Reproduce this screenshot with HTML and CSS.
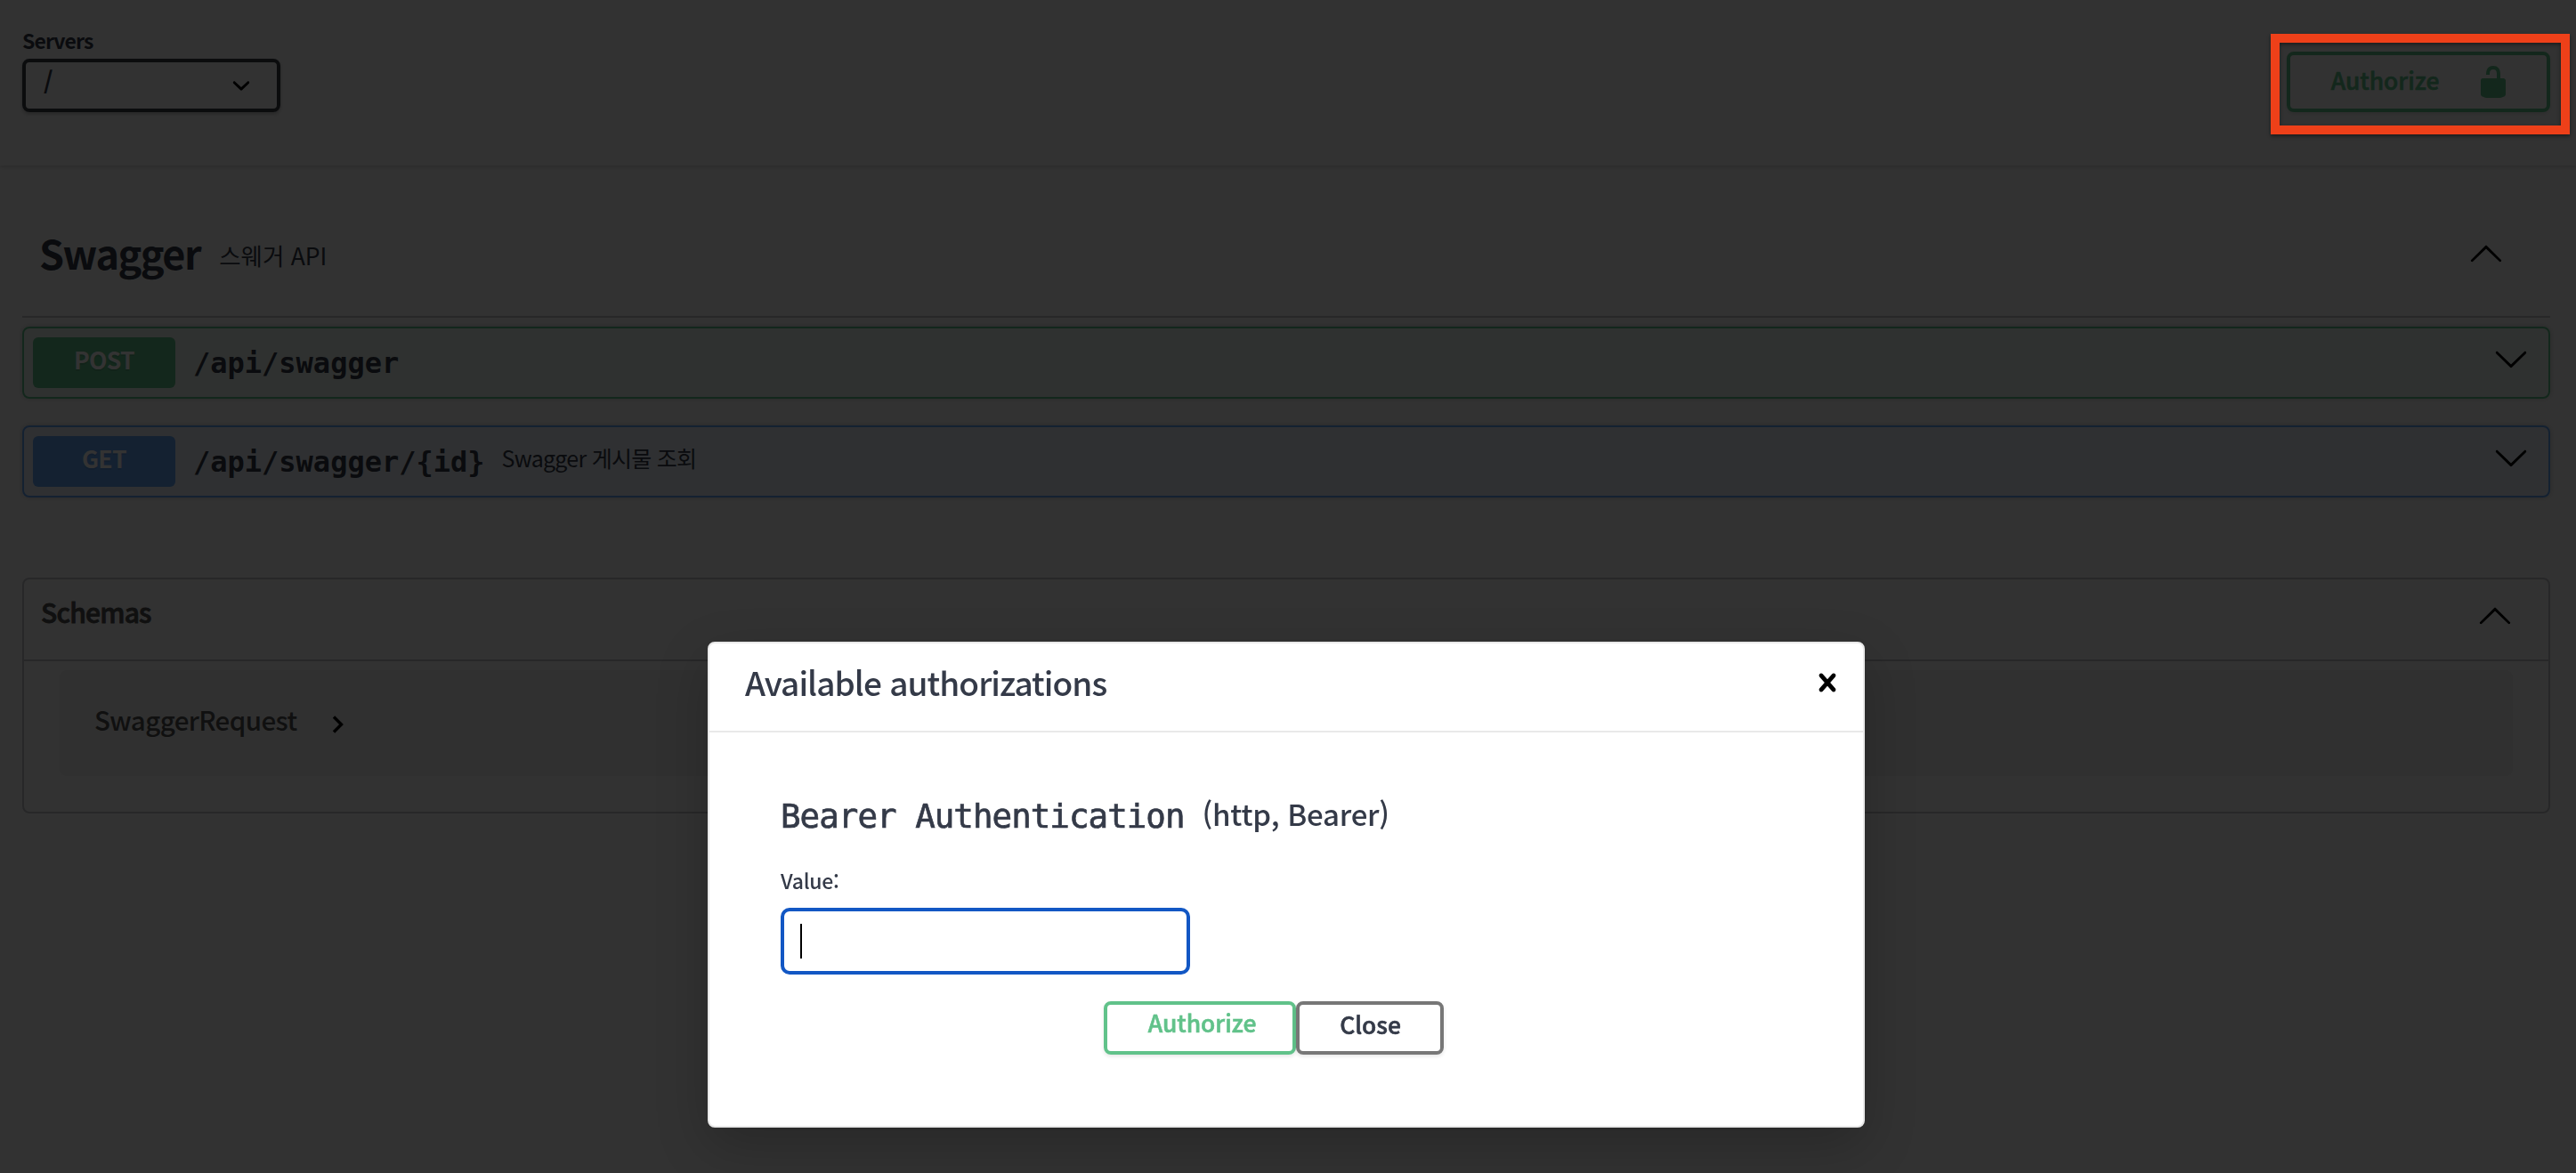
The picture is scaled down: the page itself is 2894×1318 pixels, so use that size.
FILE: index.html
```
<!DOCTYPE html>
<html lang="ko">
<head>
<meta charset="utf-8">
<title>Swagger UI</title>
<link rel="stylesheet" href="styles.css">
</head>
<body>
<svg class="sprite" aria-hidden="true">
  <symbol id="down" viewBox="0 0 20 20"><path d="M17.418 6.109c.272-.268.709-.268.979 0s.271.701 0 .969l-7.908 7.83c-.27.268-.707.268-.979 0l-7.908-7.83c-.27-.268-.27-.701 0-.969.271-.268.709-.268.979 0L10 13.25z"/></symbol>
  <symbol id="up" viewBox="0 0 20 20"><path d="M17.418 14.908c.272.268.709.268.979 0s.271-.701 0-.969L10.489 6.109c-.27-.268-.707-.268-.979 0l-7.908 7.83c-.27.268-.27.701 0 .969.271.268.709.268.979 0L10 7.767z"/></symbol>
  <symbol id="select" viewBox="0 0 20 20"><path d="M13.418 7.859c.271-.268.709-.268.978 0 .27.268.272.701 0 .969l-3.908 3.83c-.27.268-.707.268-.979 0l-3.908-3.83c-.27-.267-.27-.701 0-.969.271-.268.709-.268.978 0L10 11z"/></symbol>
  <symbol id="unlocked" viewBox="0 0 20 20"><path d="M15.8 8H14V5.6C14 2.703 12.665 1 10 1 7.334 1 6 2.703 6 5.6V6h2v-.801C8 3.754 8.797 3 10 3c1.203 0 2 .754 2 2.199V8H4c-.553 0-1 .646-1 1.199V17c0 .549.428 1.139.951 1.307l1.197.387C5.672 18.861 6.55 19 7.1 19h5.8c.549 0 1.428-.139 1.951-.307l1.196-.387c.524-.167.953-.757.953-1.306V9.199C17 8.646 16.352 8 15.8 8z"/></symbol>
  <symbol id="close" viewBox="0 0 20 20"><path d="M14.348 14.849c-.469.469-1.229.469-1.697 0L10 11.819l-2.651 3.029c-.469.469-1.229.469-1.697 0-.469-.469-.469-1.229 0-1.697l2.758-3.15-2.759-3.152c-.469-.469-.469-1.228 0-1.697.469-.469 1.228-.469 1.697 0L10 8.183l2.651-3.031c.469-.469 1.228-.469 1.697 0 .469.469.469 1.229 0 1.697l-2.758 3.152 2.758 3.15c.469.469.469 1.229 0 1.698z"/></symbol>
</svg>

<div class="page">
  <section class="scheme">
    <div class="servers">
      <span class="servers-title">Servers</span>
      <div class="select"><span>/</span><svg class="icon"><use href="#select"/></svg></div>
    </div>
    <div class="btn authorize top-authorize"><span>Authorize</span><svg class="icon"><use href="#unlocked"/></svg></div>
  </section>

  <main class="content">
    <header class="tag">
      <h3 class="tag-name">Swagger</h3>
      <small class="tag-desc">스웨거 API</small>
      <svg class="icon"><use href="#up"/></svg>
    </header>

    <div class="op post">
      <span class="method">POST</span>
      <span class="path">/api/swagger</span>
      <svg class="icon"><use href="#down"/></svg>
    </div>
    <div class="op get">
      <span class="method">GET</span>
      <span class="path">/api/swagger/{id}</span>
      <span class="summary">Swagger 게시물 조회</span>
      <svg class="icon"><use href="#down"/></svg>
    </div>

    <section class="models">
      <h4 class="models-title"><span>Schemas</span><svg class="icon"><use href="#up"/></svg></h4>
      <div class="model">
        <span>SwaggerRequest</span>
        <svg class="toggle" viewBox="0 0 14 20"><path d="M2 1.5 10.500 10 2 18.500"/></svg>
      </div>
    </section>
  </main>
</div>

<div class="backdrop"></div>
<div class="highlight"></div>

<div class="modal" role="dialog">
  <header class="modal-head"><h3>Available authorizations</h3><svg class="icon"><use href="#close"/></svg></header>
  <div class="modal-body">
    <h4 class="scheme-name"><code>Bearer Authentication</code><span>(http, Bearer)</span></h4>
    <label class="value-label">Value:</label>
    <div class="field"><i class="caret"></i></div>
    <div class="actions">
      <div class="btn authorize">Authorize</div>
      <div class="btn close">Close</div>
    </div>
  </div>
</div>
</body>
</html>
```
FILE: styles.css
```
* { box-sizing: border-box; }

body {
  margin: 0;
  height: 1318px;
  overflow: hidden;
  background: #fafafa;
  color: #343a48;
  font-family: "Noto Sans CJK KR", "Noto Sans", sans-serif;
  font-weight: 500;
}

h3, h4 { margin: 0; font-weight: 500; }

.sprite { position: absolute; width: 0; height: 0; }
.icon { display: block; flex: none; width: 40px; height: 40px; }

/* servers and top authorize bar */
.scheme {
  display: flex;
  justify-content: space-between;
  align-items: flex-start;
  height: 186px;
  padding: 30px 29px 0 25px;
  box-shadow: 0 2px 4px rgba(0, 0, 0, .15);
}
.servers { display: flex; flex-direction: column; gap: 6px; }
.servers-title { font-size: 23px; line-height: 30px; font-weight: 700; letter-spacing: -.9px; }
.select {
  display: flex;
  justify-content: space-between;
  align-items: center;
  width: 290px;
  height: 60px;
  padding: 0 20px;
  border: 4px solid #373c44;
  border-radius: 8px;
  box-shadow: 0 2px 4px rgba(0, 0, 0, .25);
}
.select span { font-size: 27px; font-weight: 700; padding-bottom: 11px; }
.select .icon { fill: #000; }

.btn {
  display: flex;
  justify-content: center;
  align-items: center;
  border: 4px solid;
  border-radius: 8px;
  font-size: 26.4px;
  line-height: 36px;
  -webkit-text-stroke: .6px;
  box-shadow: 0 2px 4px rgba(0, 0, 0, .1);
}
.btn.authorize { color: #61c28a; }
.top-authorize { width: 296px; height: 68px; margin-top: 28px; gap: 41px; padding-left: 6px; }
.top-authorize span { padding-bottom: 5px; }
.top-authorize .icon { fill: currentColor; -webkit-text-stroke: 0; }

.content { padding: 0 29px 0 25px; }

/* tag heading */
.tag {
  display: flex;
  align-items: center;
  height: 171px;
  padding: 26px 52px 0 19px;
  border-bottom: 2px solid #c1c3c8;
}
.tag-name { font-size: 45px; font-weight: 700; letter-spacing: -1.5px; }
.tag-desc { flex: 1; margin-left: 21px; padding-top: 5px; font-size: 26.500px; font-weight: 400; }

/* operations */
.op {
  display: flex;
  align-items: center;
  height: 81px;
  margin-top: 10px;
  padding: 0 22px 0 10px;
  border: 2px solid;
  border-radius: 8px;
  box-shadow: 0 0 6px rgba(0, 0, 0, .19);
}
.op + .op { margin-top: 30px; }
.op .icon { margin: 0 0 9px auto; }
.post { border-color: #61c28a; background: rgba(97, 194, 138, .1); }
.get { border-color: #64a5f5; background: rgba(100, 165, 245, .1); }
.method {
  display: flex;
  justify-content: center;
  align-items: center;
  width: 160px;
  height: 57px;
  padding-bottom: 8px;
  border-radius: 6px;
  color: #fff;
  font-size: 26.500px;
  font-weight: 700;
  letter-spacing: -.6px;
  text-shadow: 0 2px 0 rgba(0, 0, 0, .1);
}
.post .method { background: #61c28a; }
.get .method { background: #64a5f5; }
.path { margin-left: 20px; font: 700 32px "DejaVu Sans Mono", monospace; }
.summary { margin-left: 19px; padding-bottom: 10px; font-size: 25px; font-weight: 400; letter-spacing: -.75px; }

/* schemas */
.models {
  height: 265px;
  margin-top: 90px;
  border: 2px solid #c1c3c8;
  border-radius: 8px;
}
.models-title {
  display: flex;
  justify-content: space-between;
  align-items: center;
  height: 92px;
  padding: 0 40px 10px 19px;
  border-bottom: 2px solid #c1c3c8;
  color: #505050;
  font-size: 30px;
  letter-spacing: -.8px;
  -webkit-text-stroke: .8px;
}
.models-title span { padding-bottom: 8px; }
.models-title .icon { fill: #000; -webkit-text-stroke: 0; }
.model {
  display: flex;
  align-items: center;
  gap: 40px;
  height: 119px;
  margin: 10px 40px 0;
  padding-left: 39px;
  border-radius: 8px;
  background: rgba(0, 0, 0, .05);
  color: #505050;
  font-size: 29.500px;
  letter-spacing: -.6px;
}
.model span { padding-bottom: 10px; }
.toggle { width: 14px; height: 20px; margin-top: 3px; fill: none; stroke: #000; stroke-width: 3.400; }

.backdrop { position: fixed; inset: 0; background: rgba(0, 0, 0, .8); }

/* marker frame around the authorize button */
.highlight {
  position: absolute;
  left: 2551px;
  top: 38px;
  width: 336px;
  height: 113px;
  border: 10px solid #ee4019;
  box-shadow: 0 2px 4px rgba(0, 0, 0, .45), inset 0 2px 4px rgba(0, 0, 0, .45);
}

/* authorization dialog */
.modal {
  position: absolute;
  left: 795px;
  top: 721px;
  width: 1300px;
  height: 546px;
  border: 2px solid #e9e9e9;
  border-radius: 8px;
  background: #fff;
  box-shadow: 0 20px 60px rgba(0, 0, 0, .2);
}
.modal-head {
  display: flex;
  justify-content: space-between;
  align-items: center;
  height: 100px;
  padding: 0 20px 10px 40px;
  border-bottom: 2px solid #e9e9e9;
}
.modal-head h3 { padding-bottom: 2px; font-size: 37px; font-weight: 500; letter-spacing: -.95px; }
.modal-body { display: flex; flex-direction: column; padding: 70px 80px 0; }
.scheme-name { display: flex; align-items: center; height: 50px; font-size: 33px; }
.scheme-name code {
  padding-bottom: 3px;
  font: 37.500px "DejaVu Sans Mono", monospace;
  letter-spacing: -.98px;
  -webkit-text-stroke: .7px;
}
.scheme-name span { margin-left: 20px; padding-bottom: 9px; letter-spacing: -.25px; }
.value-label { margin-top: 31px; font-size: 23px; line-height: 30px; letter-spacing: -.25px; }
.field {
  width: 460px;
  height: 75px;
  margin-top: 16px;
  padding: 14px 18px;
  border: 4px solid #1257c4;
  border-radius: 10px;
}
.caret { display: block; width: 2px; height: 39px; background: #000; }
.actions { display: flex; margin: 30px 0 0 363px; }
.actions .authorize { width: 216px; height: 60px; padding: 0 0 13px 5px; }
.actions .close { width: 166px; height: 60px; padding: 0 0 9px 1px; border-color: #777; }
```
